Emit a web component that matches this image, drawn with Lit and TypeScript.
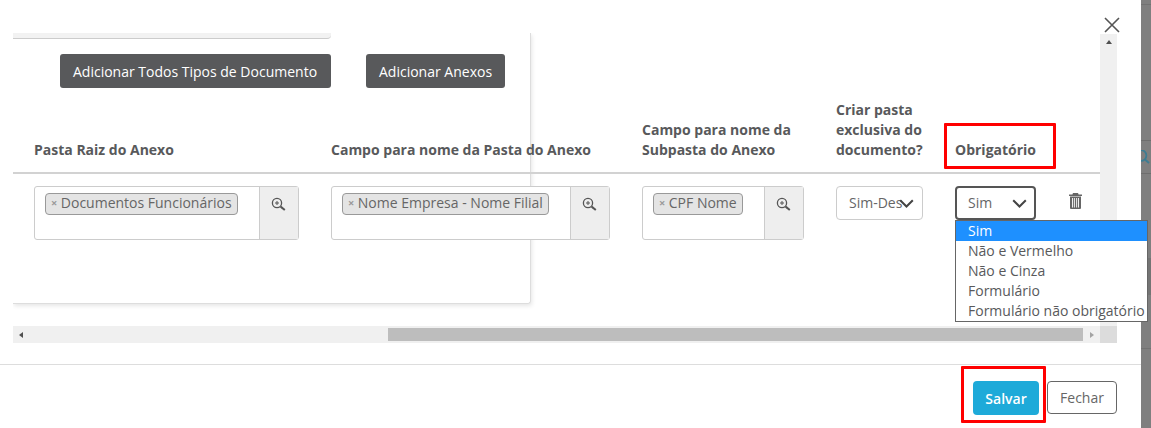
import { LitElement, css, html } from 'lit';
import { customElement } from 'lit/decorators.js';

const zoomIcon = html`<svg width="15" height="14" viewBox="0 0 15 14" fill="none" stroke="#555" stroke-width="1.3">
  <circle cx="6" cy="6" r="4.6" />
  <path d="M9.6 9.6l4.2 3.4" stroke-width="2" />
  <path d="M4 6h4M6 4v4" stroke-width="1" />
</svg>`;

const chevron = html`<svg width="15" height="9" viewBox="0 0 15 9" fill="none" stroke="#444" stroke-width="2">
  <path d="M1.2 1.2L7.5 7.5l6.3-6.3" />
</svg>`;

const columns = [
  { label: 'Pasta Raiz do Anexo', tag: 'Documentos Funcionários' },
  { label: 'Campo para nome da Pasta do Anexo', tag: 'Nome Empresa - Nome Filial' },
  { label: 'Campo para nome da Subpasta do Anexo', tag: 'CPF Nome' },
];

const options = ['Sim', 'Não e Vermelho', 'Não e Cinza', 'Formulário', 'Formulário não obrigatório'];

@customElement('app-root')
export class AppRoot extends LitElement {
  static styles = css`
    :host {
      display: flex;
      width: 1151px;
      height: 428px;
      position: relative;
      overflow: hidden;
      background: #7f7f7f;
      font-family: 'Open Sans', sans-serif;
      font-size: 14px;
      color: #58595b;
    }
    .modal {
      width: 1141px;
      height: 428px;
      flex: none;
      background: #fff;
      display: flex;
      flex-direction: column;
    }
    .behind {
      flex: 1;
      display: flex;
      flex-direction: column;
    }
    .behind .line {
      height: 1px;
      margin-top: 4px;
      background: #727272;
    }
    .behind .line.low {
      margin-top: 53px;
    }
    .behind .glass {
      height: 34px;
      margin-top: 135px;
      padding-top: 9px;
      box-sizing: border-box;
      border-top: 1px solid #6e6e6e;
      border-bottom: 1px solid #6e6e6e;
    }
    .behind .glass svg {
      display: block;
    }
    .behind .band {
      height: 37px;
      margin-top: 84px;
      background: #747474;
    }
    .top {
      height: 33px;
      flex: none;
      display: flex;
      justify-content: flex-end;
      align-items: flex-start;
      padding: 17px 21px 0 0;
      box-sizing: border-box;
    }
    .close {
      display: block;
      overflow: visible;
    }
    .frame {
      height: 311px;
      flex: none;
      margin: 0 24px 0 13px;
      display: grid;
      grid-template-columns: 1087px 17px;
      grid-template-rows: 293px 17px;
      position: relative;
    }
    .view {
      overflow: hidden;
      position: relative;
    }
    .card {
      position: absolute;
      left: 0;
      top: 0;
      width: 517px;
      height: 270px;
      border-right: 1px solid #ddd;
      border-bottom: 1px solid #ddd;
      border-bottom-right-radius: 3px;
      box-shadow: 1px 2px 4px rgba(0, 0, 0, 0.1);
    }
    .stub {
      width: 318px;
      height: 5px;
      position: relative;
      background: #f2f2f2;
      border-bottom: 1px solid #ccc;
      border-bottom-right-radius: 4px;
    }
    .actions {
      position: relative;
      display: flex;
      gap: 35px;
      padding: 15px 0 0 47px;
    }
    .dark {
      height: 34px;
      padding: 0 13px;
      display: flex;
      align-items: center;
      background: #58595b;
      color: #fff;
      border-radius: 3px;
    }
    .dark.wide {
      width: 271px;
      box-sizing: border-box;
    }
    .grid {
      position: relative;
      margin-top: 12px;
      display: grid;
      grid-template-columns: 265px 279px 162px 87px 81px 1fr;
      column-gap: 32px;
      padding-left: 21px;
    }
    .head {
      font-weight: 700;
      line-height: 20px;
      align-self: end;
      padding-bottom: 12px;
      white-space: nowrap;
    }
    .head.wrap {
      white-space: normal;
    }
    .rule {
      grid-column: 1 / -1;
      height: 2px;
      margin-left: -21px;
      background: #d2d2d2;
    }
    .cell {
      margin-top: 12px;
    }
    .lookup {
      height: 54px;
      display: flex;
      border: 1px solid #ccc;
      border-radius: 3px;
      box-sizing: border-box;
      background: #fff;
    }
    .tags {
      flex: 1;
      padding: 5px 0 0 10px;
    }
    .tag {
      display: inline-flex;
      align-items: center;
      height: 22px;
      box-sizing: border-box;
      padding: 0 5.5px 2px 5px;
      gap: 3.5px;
      background: #e4e4e4;
      border: 1px solid #999;
      border-radius: 4px;
      white-space: nowrap;
      color: #666;
    }
    .tag i {
      font-style: normal;
      font-size: 11px;
      font-weight: 700;
      color: #999;
    }
    .search {
      width: 39px;
      flex: none;
      display: flex;
      justify-content: center;
      padding: 10px 1px 0 0;
      box-sizing: border-box;
      background: #eee;
      border-left: 1px solid #ccc;
    }
    .search svg {
      display: block;
    }
    .select {
      height: 34px;
      box-sizing: border-box;
      border: 1px solid #ccc;
      border-radius: 4px;
      display: flex;
      align-items: center;
      padding: 0 0 2px 12px;
      position: relative;
      overflow: hidden;
      white-space: nowrap;
      color: #666;
    }
    .select svg {
      position: absolute;
      right: 8px;
      top: 12px;
    }
    .select.open {
      border: 2px solid #555;
      padding-left: 11px;
    }
    .select.open svg {
      right: 7px;
      top: 11px;
    }
    .trash {
      padding: 7px 0 0 1px;
    }
    .trash svg {
      display: block;
    }
    .bar-v {
      background: #f0f0f0;
      margin-top: 1px;
      display: flex;
      justify-content: center;
      padding-top: 6px;
      box-sizing: border-box;
    }
    .up {
      width: 0;
      height: 0;
      border: 3.5px solid transparent;
      border-top: 0;
      border-bottom: 4px solid #505050;
    }
    .bar-h {
      background: #f0f0f0;
      display: flex;
      align-items: center;
      position: relative;
      padding: 0 6px;
      justify-content: space-between;
    }
    .left,
    .right {
      width: 0;
      height: 0;
      border: 3.5px solid transparent;
    }
    .left {
      border-left: 0;
      border-right: 4px solid #505050;
    }
    .right {
      border-right: 0;
      border-left: 4px solid #a3a3a3;
    }
    .thumb {
      position: absolute;
      left: 375px;
      right: 17px;
      top: 2px;
      bottom: 2px;
      background: #bdbdbd;
    }
    .corner {
      background: #dcdcdc;
    }
    .foot {
      margin-top: 20px;
      border-top: 1px solid #ddd;
      display: flex;
      justify-content: flex-end;
      align-items: flex-start;
      gap: 8px;
      padding: 16px 24px 0 0;
    }
    .save {
      width: 66px;
      height: 34px;
      background: #1eaad9;
      color: #fff;
      font-weight: 600;
      border-radius: 4px;
      display: flex;
      align-items: center;
      justify-content: center;
    }
    .closebtn {
      width: 70px;
      height: 33px;
      box-sizing: border-box;
      border: 1px solid #666;
      border-radius: 4px;
      display: flex;
      align-items: center;
      justify-content: center;
      color: #666;
    }
    .menu {
      position: absolute;
      left: 955px;
      top: 220px;
      width: 193px;
      box-sizing: border-box;
      background: #fff;
      border: 1px solid #666;
      line-height: 20px;
    }
    .menu div {
      padding-left: 12px;
      white-space: nowrap;
    }
    .menu .on {
      background: #1e90ff;
      color: #fff;
    }
    .mark {
      position: absolute;
      border: 3px solid #f00;
      box-sizing: border-box;
      border-radius: 1px;
    }
    .mark.a {
      left: 944px;
      top: 123px;
      width: 112px;
      height: 46px;
    }
    .mark.b {
      left: 961px;
      top: 366px;
      width: 85px;
      height: 57px;
    }
  `;

  render() {
    return html`
      <div class="modal">
        <div class="top">
          <svg class="close" width="16" height="16" viewBox="0 0 16 16" stroke="#555" stroke-width="1.6">
            <path d="M1 1l14 14M15 1L1 15" />
          </svg>
        </div>
        <div class="frame">
          <div class="view">
            <div class="card"></div>
            <div class="stub"></div>
            <div class="actions">
              <div class="dark wide">Adicionar Todos Tipos de Documento</div>
              <div class="dark">Adicionar Anexos</div>
            </div>
            <div class="grid">
              ${columns.map(c => html`<div class="head wrap">${c.label}</div>`)}
              <div class="head">Criar pasta<br />exclusiva do<br />documento?</div>
              <div class="head">Obrigatório</div>
              <div></div>
              <div class="rule"></div>
              ${columns.map(
                c => html`
                  <div class="cell lookup">
                    <div class="tags">
                      <span class="tag"><i>×</i>${c.tag}</span>
                    </div>
                    <div class="search">${zoomIcon}</div>
                  </div>
                `,
              )}
              <div class="cell select">Sim-Des${chevron}</div>
              <div class="cell select open">Sim${chevron}</div>
              <div class="cell trash">
                <svg width="13" height="16" viewBox="0 0 13 16" fill="#666">
                  <path d="M4 0h5l.6 1.5H13V3H0V1.5h3.4zM1 3.6h11V15a1 1 0 0 1-1 1H2a1 1 0 0 1-1-1z" />
                  <path d="M3 5h.9v9.6H3zM4.9 5h.9v9.6h-.9zM7.2 5h.9v9.6h-.9zM9.1 5h.9v9.6h-.9z" fill="#fff" />
                </svg>
              </div>
            </div>
          </div>
          <div class="bar-v"><div class="up"></div></div>
          <div class="bar-h">
            <div class="left"></div>
            <div class="thumb"></div>
            <div class="right"></div>
          </div>
          <div class="corner"></div>
        </div>
        <div class="foot">
          <div class="save">Salvar</div>
          <div class="closebtn">Fechar</div>
        </div>
      </div>
      <div class="behind">
        <div class="line"></div>
        <div class="glass">
          <svg width="9" height="14" viewBox="0 0 9 14" fill="none" stroke="#3d7d93" stroke-width="1.8">
            <circle cx="0" cy="5.5" r="5.4" />
            <path d="M4 9.5l4 3.4" stroke-width="2" />
          </svg>
        </div>
        <div class="band"></div>
        <div class="line low"></div>
      </div>
      <div class="menu">
        ${options.map((o, i) => html`<div class=${i === 0 ? 'on' : ''}>${o}</div>`)}
      </div>
      <div class="mark a"></div>
      <div class="mark b"></div>
    `;
  }
}
